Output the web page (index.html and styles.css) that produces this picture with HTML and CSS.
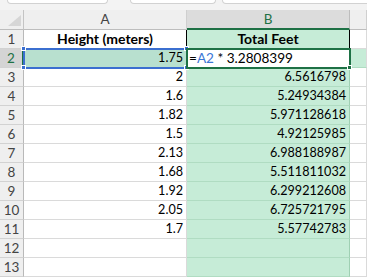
FILE: index.html
```html
<html>

<head>
  <link rel="stylesheet" href="styles.css">
</head>

<body>
  <div class="app">
    <div class="toolbar">
      <div class="tb-box namebox"></div>
      <div class="tb-box fxbox"></div>
      <div class="tb-box formulabar"></div>
    </div>
    <div class="sheet">
      <div class="corner">
        <svg width="13" height="11" viewBox="0 0 13 11"><polygon points="0,11 13,11 13,0" fill="#d6d6d6"></polygon></svg>
      </div>
      <div class="colhead">A</div>
      <div class="colhead sel">B</div>
      <div class="colhead"></div>

      <div class="rowhead">1</div>
      <div class="cell title a1">Height (meters)</div>
      <div class="cell title colb b1">Total Feet</div>
      <div class="cell"></div>

      <div class="rowhead sel">2</div>
      <div class="cell num ref">1.75<span class="h tl"></span><span class="h tr"></span><span class="h bl"></span><span class="h br"></span></div>
      <div class="cell edit">=<span class="ref-text">A2</span> * 3.2808399<span class="h br"></span></div>
      <div class="cell colc2"></div>

      <div class="rowhead">3</div>
      <div class="cell num">2</div>
      <div class="cell num colb">6.5616798</div>
      <div class="cell"></div>

      <div class="rowhead">4</div>
      <div class="cell num">1.6</div>
      <div class="cell num colb">5.24934384</div>
      <div class="cell"></div>

      <div class="rowhead">5</div>
      <div class="cell num">1.82</div>
      <div class="cell num colb">5.971128618</div>
      <div class="cell"></div>

      <div class="rowhead">6</div>
      <div class="cell num">1.5</div>
      <div class="cell num colb">4.92125985</div>
      <div class="cell"></div>

      <div class="rowhead">7</div>
      <div class="cell num">2.13</div>
      <div class="cell num colb">6.988188987</div>
      <div class="cell"></div>

      <div class="rowhead">8</div>
      <div class="cell num">1.68</div>
      <div class="cell num colb">5.511811032</div>
      <div class="cell"></div>

      <div class="rowhead">9</div>
      <div class="cell num">1.92</div>
      <div class="cell num colb">6.299212608</div>
      <div class="cell"></div>

      <div class="rowhead">10</div>
      <div class="cell num">2.05</div>
      <div class="cell num colb">6.725721795</div>
      <div class="cell"></div>

      <div class="rowhead">11</div>
      <div class="cell num">1.7</div>
      <div class="cell num colb">5.57742783</div>
      <div class="cell"></div>

      <div class="rowhead">12</div>
      <div class="cell"></div>
      <div class="cell colb"></div>
      <div class="cell"></div>

      <div class="rowhead">13</div>
      <div class="cell"></div>
      <div class="cell colb"></div>
      <div class="cell"></div>
    </div>
  </div>
</body>

</html>
```

FILE: styles.css
```css
:root {
  --green: #1e7145;
  --grid: #dadada;
  --sel-fill: #c6ecd7;
  --sel-grid: #b0dcc2;
  --blue: #3b6fd0;
}

* {
  margin: 0;
  padding: 0;
  box-sizing: border-box;
}

body {
  background: #fff;
  font-family: Lato, "Liberation Sans", sans-serif;
  overflow: hidden;
}

.app {
  width: 367px;
  height: 279px;
  overflow: hidden;
}

.toolbar {
  height: 10px;
  background: #f3f3f3;
  display: flex;
  align-items: flex-start;
}

.tb-box {
  height: 4px;
  background: #fff;
  border: 1px solid #d2d2d2;
  border-top: none;
  border-radius: 0 0 4px 4px;
}

.namebox {
  margin-left: 7px;
  width: 101px;
}

.fxbox {
  margin-left: 22px;
  width: 86px;
}

.formulabar {
  margin-left: 6px;
  flex: 1;
  margin-right: -6px;
}

.sheet {
  display: grid;
  grid-template-columns: 24px 163px 163px 17px;
  grid-template-rows: 20px repeat(13, 19px);
}

.corner {
  background: #efefef;
  border-right: 1px solid #c4c4c4;
  border-bottom: 1px solid #bdbdbd;
  display: flex;
  align-items: flex-end;
  justify-content: flex-end;
  padding: 0 2px 3px 0;
}

.corner svg {
  display: block;
}

.colhead {
  background: #efefef;
  border-right: 1px solid #cfcfcf;
  border-bottom: 1px solid #bdbdbd;
  color: #444;
  font-size: 13.5px;
  text-align: center;
  line-height: 19px;
}

.colhead.sel {
  background: #dcdcdc;
  color: var(--green);
  border-bottom: 2px solid var(--green);
  border-right-color: #bdbdbd;
}

.rowhead {
  background: #efefef;
  border-right: 1px solid #b9b9b9;
  border-bottom: 1px solid #d2d2d2;
  color: #444;
  font-size: 13.5px;
  text-align: center;
  line-height: 18px;
}

.rowhead.sel {
  background: #d4d4d4;
  color: var(--green);
  border-right: 2px solid var(--green);
}

.cell {
  border-right: 1px solid var(--grid);
  border-bottom: 1px solid var(--grid);
  font-size: 12.6px;
  line-height: 18px;
  padding: 0 3px;
  white-space: nowrap;
  color: #000;
  position: relative;
}

.num {
  text-align: right;
}

.title {
  font-weight: 700;
  font-size: 14px;
  text-align: center;
}

.colb {
  background: var(--sel-fill);
  border-bottom-color: var(--sel-grid);
  border-right-color: #9fd0b3;
}

.a1 {
  border-right-color: #000;
}

.b1 {
  border-right-color: #000;
}

.ref {
  background: #b8e0cf;
  outline: 2px solid var(--blue);
  outline-offset: -1px;
  z-index: 1;
}

.edit {
  background: #fff;
  outline: 2px solid var(--green);
  outline-offset: -1px;
  z-index: 2;
  font-size: 13.6px;
  padding-left: 2px;
}

.ref-text {
  color: #3d77d6;
}

.colc2 {
  background: var(--sel-fill);
  border-bottom-color: var(--sel-grid);
}

.h {
  position: absolute;
  width: 5px;
  height: 5px;
  background: var(--blue);
  border: 1px solid #fff;
}

.edit .h {
  background: var(--green);
}

.h.tl {
  left: -3px;
  top: -3px;
}

.h.tr {
  right: -3px;
  top: -3px;
}

.h.bl {
  left: -3px;
  bottom: -3px;
}

.h.br {
  right: -3px;
  bottom: -3px;
}
```
